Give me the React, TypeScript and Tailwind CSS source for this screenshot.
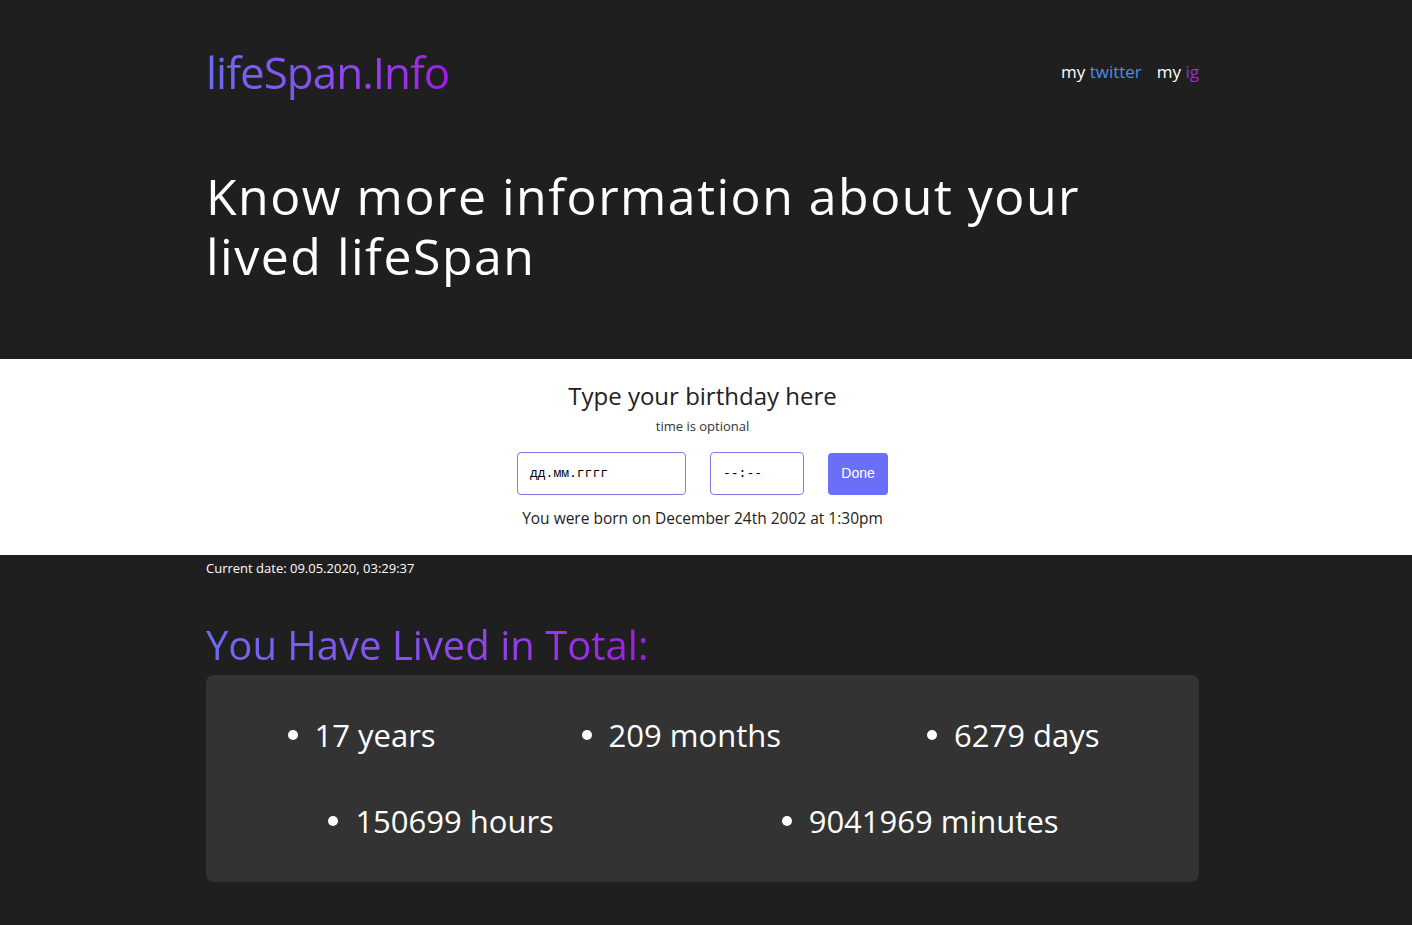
import React from 'react';

const font = { fontFamily: '"Open Sans", "Noto Sans", sans-serif' };
const mono = { fontFamily: '"Liberation Mono", monospace' };

const totals = [
  ['17 years', '209 months', '6279 days'],
  ['150699 hours', '9041969 minutes'],
];

const App = () => {
  return (
    <div className="min-h-[925px] bg-[#1f1f1f]" style={font}>
      {/* Header */}
      <div className="pr-[7px]">
        <header className="mx-auto w-[993px] pt-[44px] pb-[73px]">
          <div className="flex items-center justify-between">
            <h1 className="text-[44px] leading-[56px] bg-gradient-to-r from-[#6a6af2] to-[#a018e8] bg-clip-text text-transparent tracking-[-1px]">
              lifeSpan.Info
            </h1>
            <nav className="flex gap-[15px] text-[17px] text-white">
              <a href="#">
                my <span className="text-[#4a8fe7]">twitter</span>
              </a>
              <a href="#">
                my <span className="text-[#9b30c8]">ig</span>
              </a>
            </nav>
          </div>
          <h2 className="mt-[66px] text-[50px] leading-[60px] tracking-[1.5px] text-white">
            Know more information about your
            <br />
            lived lifeSpan
          </h2>
        </header>
      </div>

      {/* Birthday form */}
      <section className="bg-white pt-[22px] pb-[26px] text-center text-[#222]">
        <div className="pr-[7px]">
          <h3 className="text-[24px] leading-[30px]">Type your birthday here</h3>
          <p className="mt-[6px] text-[13px] leading-[18px] text-[#333]">time is optional</p>
          <div className="mt-[17px] flex items-center justify-center gap-[24px]">
            <div className="flex h-[43px] w-[169px] items-center rounded-[4px] border border-[#7b7be8] pl-[12px] text-[13px] text-black" style={mono}>
              дд.мм.гггг
            </div>
            <div className="flex h-[43px] w-[94px] items-center rounded-[4px] border border-[#7b7be8] pl-[12px] text-[13px] text-black" style={mono}>
              --:--
            </div>
            <button className="h-[42px] w-[60px] rounded-[4px] bg-[#6b6ff7] text-[14px] text-white" style={{ fontFamily: '"Liberation Sans", Arial, sans-serif' }}>
              Done
            </button>
          </div>
          <p className="mt-[12px] text-[15.5px] leading-[22px] text-[#222]">
            You were born on December 24th 2002 at 1:30pm
          </p>
        </div>
      </section>

      {/* Results */}
      <div className="pr-[7px]">
        <main className="mx-auto w-[993px] pb-[42px]">
          <p className="pt-[4px] text-[13px] leading-[18px] font-medium text-white">
            Current date: 09.05.2020, 03:29:37
          </p>
          <h2 className="mt-[43px] w-max text-[40px] leading-[50px] bg-gradient-to-r from-[#6a6af2] to-[#a018e8] bg-clip-text text-transparent">
            You Have Lived in Total:
          </h2>
          <div className="mt-[5px] rounded-[8px] bg-[#333333] pl-[22px] pr-[13px] pt-[17px] pb-[18px]">
            {totals.map((row, i) => (
              <ul key={i} className="flex justify-around">
                {row.map((item) => (
                  <li key={item} className="relative my-[19px] text-[31px] leading-[48px] text-white">
                    <span className="absolute left-[-27px] top-[19px] h-[10px] w-[10px] rounded-full bg-white" />
                    {item}
                  </li>
                ))}
              </ul>
            ))}
          </div>
        </main>
      </div>
    </div>
  );
};

export default App;
